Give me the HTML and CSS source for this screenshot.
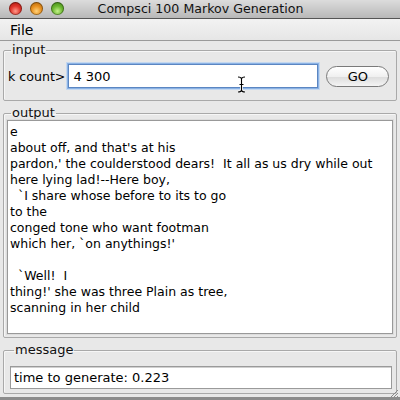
FILE: index.html
```html
<!DOCTYPE html>
<html>
<head>
<meta charset="utf-8">
<link rel="stylesheet" href="styles.css">
</head>
<body>
<div class="window">
  <div class="titlebar">
    <div class="lights">
      <span class="light red"></span>
      <span class="light orange"></span>
      <span class="light green"></span>
    </div>
    <div class="title">Compsci 100 Markov Generation</div>
  </div>
  <div class="menubar"><span class="menu">File</span></div>
  <div class="content">
    <fieldset class="panel input-panel">
      <legend>input</legend>
      <div class="input-row">
        <label class="klabel">k count&gt;</label>
        <div class="field focused">4 300</div>
        <button class="go">GO</button>
      </div>
    </fieldset>
    <fieldset class="panel output-panel">
      <legend>output</legend>
      <div class="textarea">e
about off, and that's at his
pardon,' the coulderstood dears!  It all as us dry while out
here lying lad!--Here boy,
  `I share whose before to its to go
to the
conged tone who want footman
which her, `on anythings!'

  `Well!  I
thing!' she was three Plain as tree,
scanning in her child</div>
    </fieldset>
    <fieldset class="panel message-panel">
      <legend>message</legend>
      <div class="field msg">time to generate: 0.223</div>
    </fieldset>
  </div>
  <div class="bottombar"></div>
  <svg class="grip" width="10" height="10" viewBox="0 0 10 10">
    <path d="M9 2 L2 9 M9 5 L5 9 M9 8 L8 9" stroke="#8a8a8a" stroke-width="1"/>
  </svg>
  <svg class="ibeam" width="9" height="17" viewBox="0 0 9 17">
    <path d="M1 1 Q4.5 1 4.5 3 Q4.5 1 8 1 M4.5 3 V14 M1 16 Q4.5 16 4.5 14 Q4.5 16 8 16 M2.5 8.5 H6.5" stroke="#fff" stroke-width="2.6" fill="none"/>
    <path d="M1 1 Q4.5 1 4.5 3 Q4.5 1 8 1 M4.5 3 V14 M1 16 Q4.5 16 4.5 14 Q4.5 16 8 16 M2.5 8.5 H6.5" stroke="#000" stroke-width="1.1" fill="none"/>
  </svg>
</div>
</body>
</html>
```

FILE: styles.css
```css
html, body {
  margin: 0;
  padding: 0;
}
body {
  font-family: "DejaVu Sans", "Liberation Sans", sans-serif;
  font-size: 13px;
  color: #000;
}
.window {
  position: relative;
  width: 400px;
  height: 400px;
  background: #e8e8e8;
  overflow: hidden;
  display: flex;
  flex-direction: column;
}
.titlebar {
  height: 18px;
  flex: none;
  background: linear-gradient(#dcdcdc, #b8b8b8);
  border-bottom: 1px solid #555;
  display: flex;
  align-items: center;
  position: relative;
}
.lights {
  display: flex;
  gap: 8px;
  position: absolute;
  left: 9px;
  top: 2px;
}
.light {
  width: 13px;
  height: 13px;
  border-radius: 50%;
  box-shadow: inset 0 0 0 1px rgba(0,0,0,0.35);
}
.red { background: radial-gradient(circle at 50% 70%, #ff9a8a 0, #e0352b 45%, #9c1208 100%); }
.orange { background: radial-gradient(circle at 50% 70%, #ffd27a 0, #e8901e 45%, #a35c06 100%); }
.green { background: radial-gradient(circle at 50% 70%, #c4f28a 0, #6bb630 45%, #3a7a10 100%); }
.title {
  flex: 1;
  text-align: center;
  font-size: 12.6px;
  color: #111;
  line-height: 18px;
  padding-left: 1px;
}
.menubar {
  height: 21px;
  flex: none;
  background: linear-gradient(#f2f2f2, #e6e6e6);
  border-bottom: 1px solid #9a9a9a;
  display: flex;
  align-items: center;
}
.menu {
  font-size: 14px;
  padding-left: 10px;
  padding-top: 1px;
}
.content {
  flex: 1;
  display: flex;
  flex-direction: column;
  padding: 2px 3px 0 3px;
  gap: 5px;
}
.panel {
  margin: 0;
  border: 1px solid #a9a9a9;
  border-radius: 2px;
  padding: 0 3px 3px 3px;
  background: #e8e8e8;
  box-shadow: inset 1px 1px 0 #f6f6f6;
}
.panel legend {
  padding: 0 1px;
  margin-left: 4px;
  font-size: 13px;
  line-height: 14px;
  color: #111;
}
.input-row {
  display: flex;
  align-items: center;
  height: 38px;
  padding-bottom: 2px;
}
.klabel {
  padding-left: 1px;
  white-space: nowrap;
  font-size: 12.6px;
  flex: none;
  margin-right: 3px;
}
.field {
  background: #fff;
  border: 1px solid #8a8a8a;
  box-sizing: border-box;
  padding-left: 4px;
  display: flex;
  align-items: center;
}
.focused {
  width: 250px;
  height: 24px;
  border: 1px solid #5b86c2;
  box-shadow: 0 0 0 1px #8bb2e4, 0 0 0 2px #c4d8f0;
  flex: none;
}
.go {
  margin-left: 8px;
  width: 63px;
  height: 21px;
  border: 1px solid #7a7a7a;
  border-radius: 11px;
  background: linear-gradient(#ffffff, #f0f0f0 50%, #dcdcdc 51%, #f4f4f4);
  font-family: "DejaVu Sans", sans-serif;
  font-size: 13px;
  padding: 0;
  color: #000;
}
.output-panel {
  flex: 1;
  display: flex;
  flex-direction: column;
  padding-bottom: 3px;
}
.textarea {
  flex: 1;
  background: #fff;
  border: 1px solid #999;
  box-shadow: 0 0 0 1px #dcdcdc;
  white-space: pre;
  line-height: 16px;
  padding: 3px 2px 0 2px;
  overflow: hidden;
  font-size: 12.5px;
}
.message-panel {
  flex: none;
  padding: 9px 4px 4px 6px;
}
.msg {
  height: 23px;
  border: 1px solid #9a9a9a;
  box-shadow: inset 0 1px 0 #d0d0d0;
  padding-left: 3px;
}
.bottombar {
  height: 3px;
  flex: none;
  margin-top: 3px;
  background: #8c8c8c;
}
.grip {
  position: absolute;
  right: 1px;
  bottom: 2px;
}
.ibeam {
  position: absolute;
  left: 237px;
  top: 76px;
}
```
